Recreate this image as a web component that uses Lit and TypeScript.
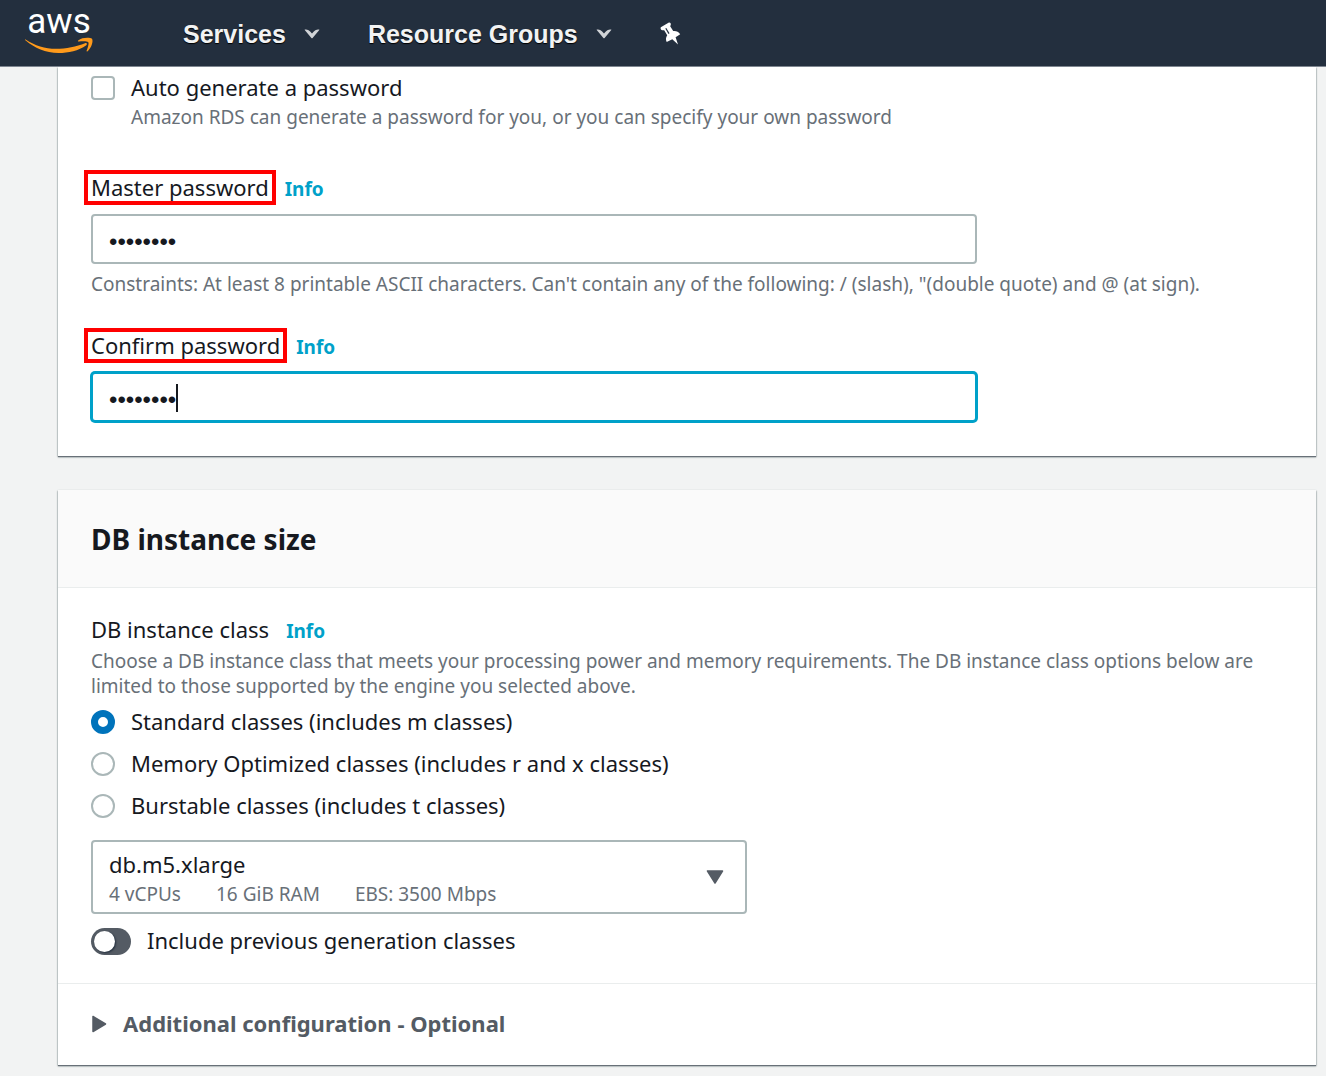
import { LitElement, html, css } from "lit";
import { customElement, property, state } from "lit/decorators.js";

const caretDown = html`<svg class="chevron" viewBox="0 0 16 10" aria-hidden="true">
  <path d="M0.5 0.8C2.8 0.2 4.6 0.8 8 4.4C11.400 0.8 13.200 0.2 15.500 0.800L8.600 8.900Q8 9.400 7.400 8.900Z" fill="currentColor" />
</svg>`;

@customElement("console-header")
class ConsoleHeader extends LitElement {
  static styles = css`
    :host {
      display: block;
      background: #232f3e;
      border-bottom: 1px solid #7d8590;
      font-family: "Liberation Sans", Arial, sans-serif;
    }
    .bar {
      display: flex;
      align-items: center;
      height: 66px;
      padding: 0 25px;
    }
    .logo {
      display: block;
      margin-right: 90px;
    }
    .logo svg {
      display: block;
    }
    .word {
      font-family: Roboto, "Noto Sans", sans-serif;
      font-size: 35px;
      font-weight: 400;
    }
    .menu {
      display: flex;
      align-items: center;
      gap: 18px;
      margin: 2px 48px 0 0;
      padding: 0;
      border: 0;
      background: none;
      color: #f2f3f3;
      font: bold 25px/30px "Liberation Sans", Arial, sans-serif;
      text-shadow: 0 1px 1px #000;
    }
    .chevron {
      width: 16px;
      height: 10px;
      color: #d0d3d6;
    }
    .pin {
      display: block;
      padding: 2px 0 0;
      border: 0;
      background: none;
      color: #fff;
    }
    .pin svg {
      display: block;
    }
  `;

  render() {
    return html`<header class="bar">
      <a class="logo" href="#home" aria-label="AWS home">
        <svg width="68" height="66" viewBox="0 -10 68 66" aria-hidden="true">
          <text class="word" x="34" y="23" text-anchor="middle" fill="#fff">aws</text>
          <path fill="#ff9a1b" d="M0.600 29.400C10 35.500 20 38.800 31 38.800C41 38.800 51.500 36.400 60 33.200C61.500 32.500 62.700 34.100 61.300 35.200C53.500 40.700 43.500 43 33.500 43C20.500 43 9.500 38 0.700 30.600C-0.100 29.900 0 29.100 0.600 29.400Z" />
          <path fill="#ff9a1b" d="M53.200 30.400C57 27.300 65 27.300 67 28.800C68.600 31.500 66.200 38.200 62.600 41.200C61.900 41.700 61.300 41.400 61.600 40.700C62.700 38 64.200 33.500 63.300 32.300C62.200 31 57 31.200 54 31.600C53 31.700 52.500 31 53.200 30.400Z" />
        </svg>
      </a>
      <button class="menu">Services ${caretDown}</button>
      <button class="menu">Resource Groups ${caretDown}</button>
      <button class="pin" aria-label="Pin shortcuts">
        <svg width="22" height="24" viewBox="0 0 22 24" aria-hidden="true">
          <path fill="currentColor" d="M0.800 5.200L8.900 0.500C10.300 0.200 11.300 1.800 10.700 3L10.200 4.200L13.200 9C15.800 8.600 18.500 9.500 20.200 12.200L15.600 15.200L18 22.500L12.300 17.200L6.700 20C5.500 17.500 5.800 15.500 7.200 13.200L4.200 8.300L2.500 8.300C1 8.100 0.100 6.500 0.800 5.200Z" />
          <path d="M5.800 6.300L9 11.600" stroke="#232f3e" stroke-width="1.200" />
        </svg>
      </button>
    </header>`;
  }
}

@customElement("password-field")
class PasswordField extends LitElement {
  @property() label = "";
  @property() hint = "";
  @property({ type: Boolean }) active = false;

  static styles = css`
    :host {
      display: block;
    }
    .head {
      display: flex;
      align-items: baseline;
      gap: 16px;
      box-sizing: border-box;
      height: 30px;
      padding-top: 1px;
      margin-bottom: 11px;
    }
    .label {
      font-size: 22px;
      line-height: 21px;
      outline: 4px solid #f00;
      outline-offset: 3px;
    }
    .info {
      color: #00a1c9;
      font-size: 19px;
      font-weight: 700;
      text-decoration: none;
    }
    .control {
      display: grid;
      align-items: center;
      max-width: 886px;
    }
    .input,
    .ghost {
      grid-area: 1 / 1;
      box-sizing: border-box;
      width: 100%;
      height: 50px;
      padding: 6px 16px 0;
      font: 24px/30px "Liberation Sans", Arial, sans-serif;
      color: #16191f;
    }
    .input {
      border: 2px solid #aab7b8;
      border-radius: 4px;
      background: #fff;
      outline: none;
    }
    .input.on {
      border-color: #00a1c9;
      box-shadow: 0 0 0 1px #00a1c9;
      caret-color: transparent;
    }
    .ghost {
      display: flex;
      align-items: center;
      padding: 2px 18px 0;
      pointer-events: none;
    }
    .spacer {
      visibility: hidden;
    }
    .caret {
      width: 2px;
      height: 28px;
      background: #16191f;
    }
    .hint {
      margin: 8px 0 0;
      color: #687078;
      font-size: 19px;
      line-height: 25px;
    }
  `;

  render() {
    return html`
      <div class="head">
        <label class="label" for="field">${this.label}</label>
        <a class="info" href="#info">Info</a>
      </div>
      <div class="control">
        <input id="field" class="input ${this.active ? "on" : ""}" type="password" value="password" />
        ${this.active
          ? html`<div class="ghost" aria-hidden="true"><span class="spacer">••••••••</span><span class="caret"></span></div>`
          : null}
      </div>
      ${this.hint ? html`<p class="hint">${this.hint}</p>` : null}
    `;
  }
}

@customElement("app-root")
class AppRoot extends LitElement {
  @state() private family = 0;

  private families = [
    "Standard classes (includes m classes)",
    "Memory Optimized classes (includes r and x classes)",
    "Burstable classes (includes t classes)",
  ];

  static styles = css`
    :host {
      display: block;
      min-height: 100vh;
      background: #f2f3f3;
      color: #16191f;
      font-family: "Noto Sans", sans-serif;
      font-size: 22px;
      line-height: 30px;
    }
    .page {
      display: flex;
      flex-direction: column;
      gap: 34px;
      padding: 0 10px 10px 58px;
    }
    .panel {
      background: #fff;
      box-shadow: 0 1px 1px #687078, 0 1px 2px #879596;
    }
    .credentials {
      padding: 6px 33px 34px;
    }
    .option {
      display: flex;
      align-items: center;
      gap: 16px;
    }
    .name {
      padding-bottom: 2px;
      line-height: 28px;
    }
    .tick,
    .radio {
      appearance: none;
      flex: none;
      box-sizing: border-box;
      width: 24px;
      height: 24px;
      margin: 0;
      border: 2px solid #aab7b8;
      background: #fff;
    }
    .tick {
      border-radius: 4px;
    }
    .radio {
      border-radius: 50%;
    }
    .radio:checked {
      border: 7px solid #0073bb;
    }
    .hint {
      margin: 0;
      color: #687078;
      font-size: 19px;
      line-height: 25px;
    }
    .indent {
      margin: 2px 0 43px 40px;
    }
    .second {
      margin-top: 34px;
    }
    .title-bar {
      padding: 33px 33px 32px;
      border-bottom: 1px solid #eaeded;
      background: #fafafa;
    }
    .title {
      margin: 0;
      font-size: 28px;
      font-weight: 700;
      line-height: 32px;
    }
    .body {
      padding: 26px 33px 27px;
      border-bottom: 1px solid #eaeded;
    }
    .head {
      display: flex;
      align-items: baseline;
      gap: 17px;
      height: 30px;
      margin-bottom: 5px;
    }
    .info {
      color: #00a1c9;
      font-size: 19px;
      font-weight: 700;
      text-decoration: none;
    }
    .radios {
      display: flex;
      flex-direction: column;
      gap: 12px;
      margin: 8px 0 19px;
      padding: 0;
      border: 0;
    }
    .picker {
      display: grid;
      align-items: center;
      max-width: 656px;
      margin-bottom: 12px;
    }
    .select,
    .specs,
    .arrow {
      grid-area: 1 / 1;
    }
    .select {
      appearance: none;
      box-sizing: border-box;
      width: 100%;
      height: 74px;
      padding: 0 16px 26px;
      border: 2px solid #aab7b8;
      border-radius: 4px;
      background: #fff;
      color: #16191f;
      font: 22px/30px "Noto Sans", sans-serif;
    }
    .specs {
      display: flex;
      align-self: end;
      gap: 35px;
      padding: 0 18px 7px;
      color: #687078;
      font-size: 19px;
      line-height: 25px;
      pointer-events: none;
    }
    .arrow {
      justify-self: end;
      margin-right: 23px;
      pointer-events: none;
    }
    .switch {
      appearance: none;
      display: flex;
      align-items: center;
      flex: none;
      width: 40px;
      height: 27px;
      margin: 0;
      border-radius: 14px;
      background: #545b64;
    }
    .switch::before {
      content: "";
      width: 21px;
      height: 21px;
      margin-left: 3px;
      border-radius: 50%;
      background: #fff;
      box-shadow: 1px 1px 2px #232f3e;
    }
    .switch:checked {
      justify-content: flex-end;
      background: #0073bb;
    }
    .more {
      display: flex;
      align-items: center;
      gap: 16px;
      width: 100%;
      padding: 25px 33px 26px;
      border: 0;
      background: none;
      color: #545b64;
      font: bold 22px/30px "Noto Sans", sans-serif;
      text-align: left;
    }
  `;

  render() {
    return html`
      <console-header></console-header>
      <main class="page">
        <section class="panel credentials">
          <label class="option"><input class="tick" type="checkbox" /><span class="name">Auto generate a password</span></label>
          <p class="hint indent">Amazon RDS can generate a password for you, or you can specify your own password</p>
          <password-field
            label="Master password"
            hint="Constraints: At least 8 printable ASCII characters. Can't contain any of the following: / (slash), &quot;(double quote) and @ (at sign)."
          ></password-field>
          <password-field class="second" label="Confirm password" active></password-field>
        </section>
        <section class="panel">
          <div class="title-bar"><h2 class="title">DB instance size</h2></div>
          <div class="body">
            <div class="head"><span id="class-label">DB instance class</span><a class="info" href="#info">Info</a></div>
            <p class="hint">
              Choose a DB instance class that meets your processing power and memory requirements. The DB instance class
              options below are limited to those supported by the engine you selected above.
            </p>
            <fieldset class="radios" aria-labelledby="class-label">
              ${this.families.map(
                (name, i) => html`<label class="option"
                  ><input
                    class="radio"
                    type="radio"
                    name="family"
                    .checked=${this.family === i}
                    @change=${() => (this.family = i)}
                  /><span class="name">${name}</span></label
                >`,
              )}
            </fieldset>
            <div class="picker">
              <select class="select" aria-labelledby="class-label">
                <option>db.m5.xlarge</option>
              </select>
              <div class="specs"><span>4 vCPUs</span><span>16 GiB RAM</span><span>EBS: 3500 Mbps</span></div>
              <svg class="arrow" width="18" height="14" viewBox="0 0 18 14" aria-hidden="true">
                <path d="M1.500 1H16.500L9 13Z" fill="#545b64" stroke="#545b64" stroke-width="1.500" stroke-linejoin="round" />
              </svg>
            </div>
            <label class="option"
              ><input class="switch" type="checkbox" role="switch" /><span class="name">Include previous generation classes</span></label
            >
          </div>
          <button class="more" aria-expanded="false">
            <svg width="16" height="18" viewBox="0 0 16 18" aria-hidden="true">
              <path d="M2 1.500V16.500L14.500 9Z" fill="#545b64" stroke="#545b64" stroke-width="1.500" stroke-linejoin="round" />
            </svg>
            <span class="name">Additional configuration - Optional</span>
          </button>
        </section>
      </main>
    `;
  }
}
